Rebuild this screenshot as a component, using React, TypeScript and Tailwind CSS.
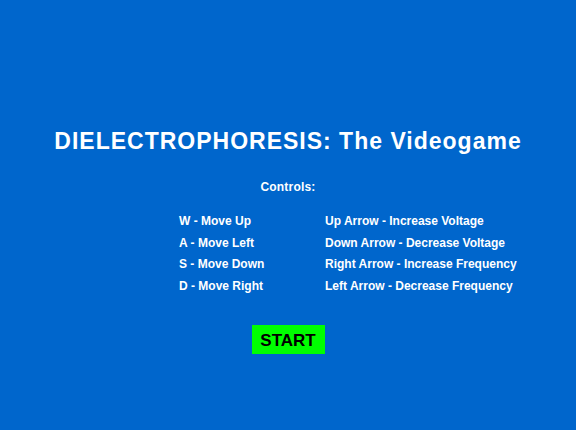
import React from 'react';

const moves = ['W - Move Up', 'A - Move Left', 'S - Move Down', 'D - Move Right'];
const tuning = [
  'Up Arrow - Increase Voltage',
  'Down Arrow - Decrease Voltage',
  'Right Arrow - Increase Frequency',
  'Left Arrow - Decrease Frequency',
];

export default function App() {
  return (
    <div className="w-[576px] h-[430px] bg-[#0066cc] text-white font-['Liberation_Sans',Arial,sans-serif] flex flex-col">
      {/* Title */}
      <h1 className="mt-[127px] text-center text-[23px] leading-[28px] font-bold tracking-[1px]">
        DIELECTROPHORESIS: The Videogame
      </h1>

      <p className="mt-[25px] text-center text-[12px] leading-[14px] font-bold tracking-[0.2px]">Controls:</p>

      {/* Key table */}
      <div className="mt-[20px] ml-[179px] grid grid-cols-[146px_auto] gap-y-[7.5px] text-[12px] leading-[14px] font-bold">
        {moves.map((m, i) => (
          <React.Fragment key={m}>
            <div>{m}</div>
            <div>{tuning[i]}</div>
          </React.Fragment>
        ))}
      </div>

      <div className="mt-[32px] flex justify-center">
        <button className="w-[73px] h-[29px] pt-[3px] bg-[#00ff00] text-black text-[17px] leading-[20px] font-bold">START</button>
      </div>
    </div>
  );
}
